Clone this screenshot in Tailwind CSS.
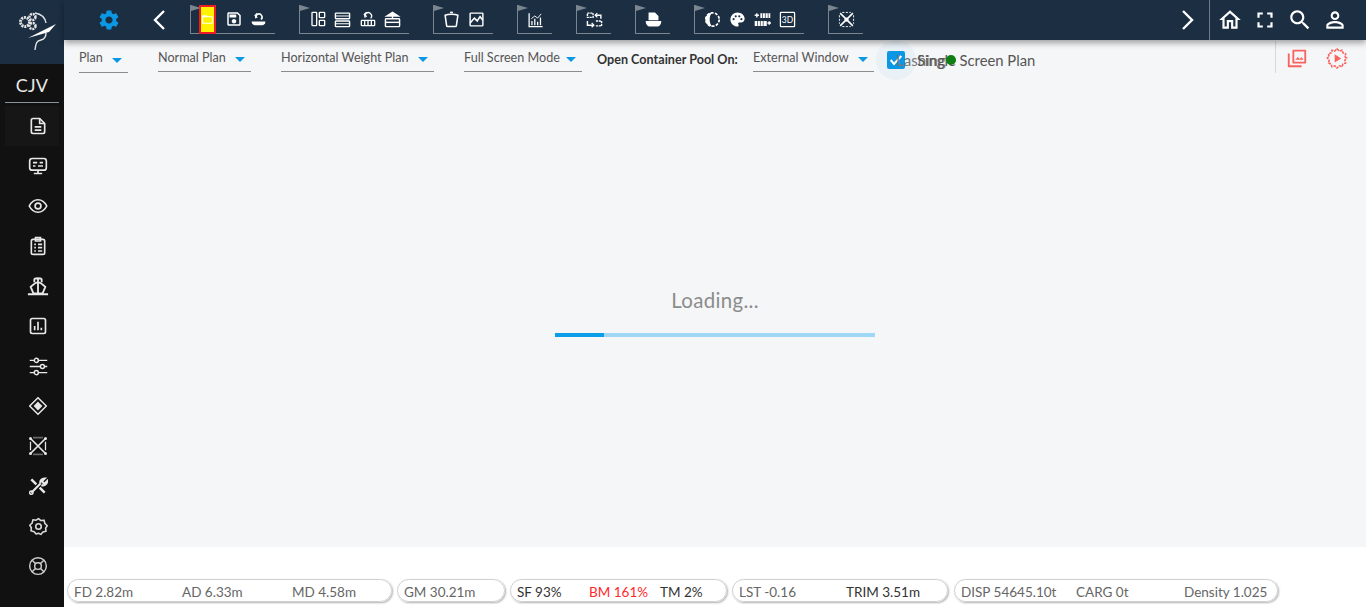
<!DOCTYPE html>
<html lang="en">
<head>
    <meta charset="UTF-8">
    <title>Stowage Plan</title>
    <script src="https://cdn.jsdelivr.net/npm/@tailwindcss/browser@4"></script>
</head>
<body class="bg-white font-['Lato','Open_Sans',sans-serif] overflow-hidden">
<div class="flex h-[607px] w-[1366px]">

    <!-- Sidebar -->
    <aside class="w-16 shrink-0 bg-[#111111] flex flex-col">
        <div class="h-16 bg-[#1b2e42] flex items-start pl-[17px] pt-[12px]">
            <svg class="w-[40px] h-[40px]" viewBox="0 0 40 40" fill="none" stroke="#e4e4e4">
                <circle cx="8" cy="10" r="4.500" stroke-width="3" stroke-dasharray="2 0.800"/>
                <circle cx="15.500" cy="5" r="3" stroke-width="2.500" stroke-dasharray="2 0.800"/>
                <circle cx="15.500" cy="14" r="3" stroke-width="2.500" stroke-dasharray="2 0.800"/>
                <path d="M18 1c6 1 10 4 11 10" stroke-width="1.400"/>
                <path d="M11 26L39 12l-7 8z" fill="#ffffff" stroke="none"/>
                <path d="M29 21c0 4-1 6-5 7-4 1-5 2-6 10" stroke-width="1.400"/>
            </svg>
        </div>
        <div class="mx-[5px] h-[39px] border-b border-[#8a939c] flex items-center justify-center text-[#e8e8e8] text-[18px] leading-none pt-1 tracking-[0.3px] font-['Lato',sans-serif]">CJV</div>
        <nav class="flex flex-col mt-[3px]">
            <a class="mx-[5px] h-10 bg-[#161616] flex items-center justify-center pl-[12px]">
                <svg class="w-[20px] h-[20px]" viewBox="0 0 24 24" fill="none" stroke="#e8e8e8" stroke-width="2"><path d="M6 3h8l6 6v10a2 2 0 0 1-2 2H6a2 2 0 0 1-2-2V5a2 2 0 0 1 2-2z" stroke-linejoin="round"/><path d="M14 3v6h6M8 13h8M8 17h8"/></svg>
            </a>
            <a class="mx-[5px] h-10 flex items-center justify-center pl-[12px]">
                <svg class="w-[20px] h-[20px]" viewBox="0 0 24 24" fill="none" stroke="#e8e8e8" stroke-width="2"><rect x="2" y="3" width="20" height="14" rx="3"/><path d="M6 8h5M14 8h4M6 12h3M12 12h6M12 17v3M7 21h10"/></svg>
            </a>
            <a class="mx-[5px] h-10 flex items-center justify-center pl-[12px]">
                <svg class="w-[20px] h-[20px]" viewBox="0 0 24 24" fill="none" stroke="#e8e8e8" stroke-width="2"><path d="M1.500 12C4 7 8 4.500 12 4.500S20 7 22.500 12C20 17 16 19.500 12 19.500S4 17 1.500 12z"/><circle cx="12" cy="12" r="3.500"/></svg>
            </a>
            <a class="mx-[5px] h-10 flex items-center justify-center pl-[12px]">
                <svg class="w-[20px] h-[20px]" viewBox="0 0 24 24" fill="none" stroke="#e8e8e8" stroke-width="2"><rect x="4" y="4" width="16" height="18" rx="2"/><path d="M9 2h6v4H9zM7.500 10h2M12 10h5M7.500 14h2M12 14h5M7.500 18h2M12 18h5"/></svg>
            </a>
            <a class="mx-[5px] h-10 flex items-center justify-center pl-[12px]">
                <svg class="w-[22px] h-[22px]" viewBox="0 0 24 24" fill="none" stroke="#e8e8e8" stroke-width="2"><path d="M8 8V5c0-2 8-2 8 0v3M12 4v4M4 13c3-3 5-5 8-5s5 2 8 5l-3 7H7zM12 8v12M1 21h22"/></svg>
            </a>
            <a class="mx-[5px] h-10 flex items-center justify-center pl-[12px]">
                <svg class="w-[20px] h-[20px]" viewBox="0 0 24 24" fill="none" stroke="#e8e8e8" stroke-width="2"><rect x="3" y="3" width="18" height="18" rx="2"/><path d="M8 17v-5M12 17V7M16 17v-3"/></svg>
            </a>
            <a class="mx-[5px] h-10 flex items-center justify-center pl-[12px]">
                <svg class="w-[21px] h-[21px]" viewBox="0 0 24 24" fill="none" stroke="#e8e8e8" stroke-width="1.700"><path d="M2 5h5M12 5h10M2 12h12M19 12h3M2 19h5M12 19h10"/><circle cx="9.500" cy="5" r="2.300"/><circle cx="16.500" cy="12" r="2.300"/><circle cx="9.500" cy="19" r="2.300"/></svg>
            </a>
            <a class="mx-[5px] h-10 flex items-center justify-center pl-[12px]">
                <svg class="w-[20px] h-[20px]" viewBox="0 0 24 24" fill="none" stroke="#e8e8e8" stroke-width="1.800"><path d="M12 2l10 10-10 10L2 12z" stroke-linejoin="round"/><path d="M12 8l4 4-4 4-4-4z" fill="#e8e8e8"/></svg>
            </a>
            <a class="mx-[5px] h-10 flex items-center justify-center pl-[12px]">
                <svg class="w-[20px] h-[20px]" viewBox="0 0 24 24" fill="none" stroke="#e8e8e8" stroke-width="2"><path d="M3 3l18 18M21 3L3 21"/><path d="M6 2h12M6 22h12" stroke="#666666"/><path d="M3 7v10M21 7v10" stroke-width="1.500"/><circle cx="3" cy="3" r="1.800" fill="#e8e8e8" stroke="none"/><circle cx="21" cy="3" r="1.800" fill="#e8e8e8" stroke="none"/><circle cx="3" cy="21" r="1.800" fill="#e8e8e8" stroke="none"/><circle cx="21" cy="21" r="1.800" fill="#e8e8e8" stroke="none"/></svg>
            </a>
            <a class="mx-[5px] h-10 flex items-center justify-center pl-[12px]">
                <svg class="w-[20px] h-[20px]" viewBox="0 0 24 24" fill="none" stroke="#e8e8e8" stroke-width="2.500"><path d="M4 20L15 9M15 9c-1-3 1-6 5-6l-3 3 1 2 2 1 3-3c0 4-4 6-7 5"/><circle cx="4" cy="20" r="2" stroke-width="1.800"/><path d="M4 4l6 6M14 14l6 6" stroke-width="3"/></svg>
            </a>
            <a class="mx-[5px] h-10 flex items-center justify-center pl-[12px]">
                <svg class="w-[19px] h-[19px]" viewBox="0 0 24 24" fill="none" stroke="#d8d8d8" stroke-width="2"><path d="M12 2l3 2.500 4-.5 1 4 3 3-2 3 .5 4-4 1-2.500 3-3-1.500L9 21.500l-2.500-3-4-1 .5-4-2-3 3-3 1-4 4 .5z" stroke-linejoin="round"/><circle cx="12" cy="12" r="3.500"/></svg>
            </a>
            <a class="mx-[5px] h-10 flex items-center justify-center pl-[12px]">
                <svg class="w-[20px] h-[20px]" viewBox="0 0 24 24" fill="none" stroke="#d0d0d0" stroke-width="1.700"><circle cx="12" cy="12" r="10"/><circle cx="12" cy="12" r="4"/><path d="M5 5l4 4M19 5l-4 4M5 19l4-4M19 19l-4-4"/></svg>
            </a>
        </nav>
    </aside>

    <div class="flex-1 flex flex-col min-w-0">

        <!-- Top bar -->
        <header class="h-10 shrink-0 bg-[#1b2e42] flex items-center relative z-10 shadow-[0_3px_6px_rgba(0,0,0,0.35)]">
            <svg class="w-[24px] h-[24px] ml-[33px] text-[#0b97e4]" viewBox="0 0 24 24" fill="currentColor"><path d="M19.140 12.940c.04-.3.06-.61.06-.94 0-.32-.02-.64-.07-.94l2.030-1.580c.18-.14.23-.41.12-.61l-1.920-3.320c-.12-.22-.37-.29-.59-.22l-2.390.96c-.5-.38-1.030-.7-1.620-.94l-.36-2.540c-.04-.24-.24-.41-.48-.41h-3.840c-.24 0-.43.17-.47.41l-.36 2.540c-.59.24-1.130.57-1.620.94l-2.390-.96c-.22-.08-.47 0-.59.22L2.740 8.870c-.12.21-.08.47.12.61l2.030 1.580c-.05.3-.09.63-.09.94s.02.64.07.94l-2.030 1.580c-.18.14-.23.41-.12.61l1.920 3.320c.12.22.37.29.59.22l2.390-.96c.5.38 1.030.7 1.620.94l.36 2.540c.05.24.24.41.48.41h3.840c.24 0 .44-.17.47-.41l.36-2.540c.59-.24 1.130-.56 1.620-.94l2.390.96c.22.08.47 0 .59-.22l1.920-3.320c.12-.22.07-.47-.12-.61l-2.010-1.580zM12 15.600c-1.980 0-3.600-1.620-3.600-3.600s1.620-3.600 3.600-3.600 3.600 1.620 3.600 3.600-1.620 3.600-3.600 3.600z"/></svg>
            <svg class="w-[14px] h-[20px] ml-[31px]" viewBox="0 0 14 20" fill="none" stroke="#ffffff" stroke-width="2.400"><path d="M12 1L3 10l9 9"/></svg>

            <div class="flex ml-[24px] gap-6">
                <!-- file group -->
                <div class="relative h-[29px] mt-[-1px] border-l border-b border-[#7a858f] flex items-center pl-[5px] pr-[4px]">
                    <svg class="absolute left-0 top-0 w-[10px] h-[6px]" viewBox="0 0 10 6"><path d="M0 0l10 3-10 3z" fill="#7a858f"/></svg>
                    <div class="w-[25px] h-[29px] flex justify-center">
                        <div class="w-[17px] h-[29px] bg-[#fff200] border-2 border-[#ee1c25] flex items-center justify-center ml-[-2px]">
                            <svg class="w-[13px] h-[13px]" viewBox="0 0 24 24" fill="#ffffff"><path d="M20 6h-8l-2-2H4c-1.100 0-1.990.9-1.990 2L2 18c0 1.100.9 2 2 2h16c1.100 0 2-.9 2-2V8c0-1.100-.9-2-2-2zm0 12H4V8h16v10z"/></svg>
                        </div>
                    </div>
                    <div class="w-[25px] flex justify-center">
                        <svg class="w-[18px] h-[18px]" viewBox="0 0 24 24" fill="#ffffff"><path d="M17 3H5c-1.110 0-2 .9-2 2v14c0 1.100.89 2 2 2h14c1.100 0 2-.9 2-2V7l-4-4zm2 16H5V5h11.170L19 7.830V19zm-7-7c-1.660 0-3 1.340-3 3s1.340 3 3 3 3-1.340 3-3-1.340-3-3-3zM6 6h9v4H6z"/></svg>
                    </div>
                    <div class="w-[25px] flex justify-center">
                        <svg class="w-[15px] h-[15px]" viewBox="0 0 24 24" fill="none" stroke="#ffffff" stroke-width="2.500"><path d="M8 10a5 5 0 1 1 8 2"/><path d="M10 2L6.500 5.500 10 9" stroke-width="2"/><path d="M1 15h22c0 4-3 6-5 6H6c-2 0-5-2-5-6z" fill="#ffffff" stroke="none"/></svg>
                    </div>
                </div>
                <!-- layout group -->
                <div class="relative h-[29px] mt-[-1px] border-l border-b border-[#7a858f] flex items-center pl-[5px] pr-[4px]">
                    <svg class="absolute left-0 top-0 w-[10px] h-[6px]" viewBox="0 0 10 6"><path d="M0 0l10 3-10 3z" fill="#7a858f"/></svg>
                    <div class="w-[25px] flex justify-center">
                        <svg class="w-[16px] h-[16px]" viewBox="0 0 24 24" fill="none" stroke="#ffffff" stroke-width="2"><rect x="3" y="2" width="7" height="20" rx="1"/><rect x="14" y="2" width="8" height="8" rx="1"/><rect x="14" y="14" width="8" height="8" rx="1"/></svg>
                    </div>
                    <div class="w-[25px] flex justify-center">
                        <svg class="w-[17px] h-[17px]" viewBox="0 0 24 24" fill="none" stroke="#ffffff" stroke-width="2"><rect x="2" y="3" width="20" height="8" rx="1"/><rect x="2" y="14" width="20" height="8" rx="1"/><path d="M2 7h20M2 18h20" stroke-width="1.500"/></svg>
                    </div>
                    <div class="w-[25px] flex justify-center">
                        <svg class="w-[16px] h-[16px]" viewBox="0 0 24 24" fill="none" stroke="#ffffff" stroke-width="2"><path d="M8 10a5 5 0 1 1 8 1"/><path d="M10 2L6.500 5 10 8.500"/><rect x="2" y="14" width="20" height="8" rx="1"/><path d="M7 14v8M12 14v8M17 14v8"/></svg>
                    </div>
                    <div class="w-[25px] flex justify-center">
                        <svg class="w-[17px] h-[17px]" viewBox="0 0 24 24" fill="none" stroke="#ffffff" stroke-width="2"><path d="M12 2l8 5H4z" fill="#ffffff"/><path d="M12 7v4"/><rect x="2" y="11" width="20" height="11" rx="1"/><path d="M2 16h20"/></svg>
                    </div>
                </div>
                <!-- view group -->
                <div class="relative h-[29px] mt-[-1px] border-l border-b border-[#7a858f] flex items-center pl-[5px] pr-[4px]">
                    <svg class="absolute left-0 top-0 w-[10px] h-[6px]" viewBox="0 0 10 6"><path d="M0 0l10 3-10 3z" fill="#7a858f"/></svg>
                    <div class="w-[25px] flex justify-center">
                        <svg class="w-[17px] h-[17px]" viewBox="0 0 24 24" fill="none" stroke="#ffffff" stroke-width="2.200"><path d="M3 6c4-2 14-2 18 0l-2 14a2 2 0 0 1-2 2H7a2 2 0 0 1-2-2z" stroke-linejoin="round"/><path d="M10 2h4"/></svg>
                    </div>
                    <div class="w-[25px] flex justify-center">
                        <svg class="w-[17px] h-[17px]" viewBox="0 0 24 24" fill="none" stroke="#ffffff" stroke-width="2"><rect x="3" y="3" width="18" height="18" rx="1"/><path d="M3 17l6-7 4 4 4-6 4 5" stroke-width="2.200"/></svg>
                    </div>
                </div>
                <!-- chart group -->
                <div class="relative h-[29px] mt-[-1px] border-l border-b border-[#7a858f] flex items-center pl-[5px] pr-[4px]">
                    <svg class="absolute left-0 top-0 w-[10px] h-[6px]" viewBox="0 0 10 6"><path d="M0 0l10 3-10 3z" fill="#7a858f"/></svg>
                    <div class="w-[25px] flex justify-center">
                        <svg class="w-[17px] h-[17px]" viewBox="0 0 24 24" fill="none" stroke="#ffffff" stroke-width="1.800"><path d="M3 3v19h19"/><path d="M7 20v-6M11 20v-9M15 20v-5M19 20V9"/><path d="M6 11l5-4 4 3 5-6" stroke-width="1.300"/></svg>
                    </div>
                </div>
                <!-- swap group -->
                <div class="relative h-[29px] mt-[-1px] border-l border-b border-[#7a858f] flex items-center pl-[5px] pr-[4px]">
                    <svg class="absolute left-0 top-0 w-[10px] h-[6px]" viewBox="0 0 10 6"><path d="M0 0l10 3-10 3z" fill="#7a858f"/></svg>
                    <div class="w-[25px] flex justify-center">
                        <svg class="w-[17px] h-[17px]" viewBox="0 0 24 24" fill="none" stroke="#ffffff" stroke-width="2"><path d="M2 3h8v6H2z" stroke-dasharray="3 1"/><path d="M13 6h8v5"/><path d="M16 3l-3 3 3 3" stroke-width="1.800"/><path d="M2 14v6h9"/><path d="M14 14h8v7h-8" stroke-dasharray="3 1"/><path d="M8 17l3 3-3 3" stroke-width="1.800"/></svg>
                    </div>
                </div>
                <!-- report group -->
                <div class="relative h-[29px] mt-[-1px] border-l border-b border-[#7a858f] flex items-center pl-[5px] pr-[4px]">
                    <svg class="absolute left-0 top-0 w-[10px] h-[6px]" viewBox="0 0 10 6"><path d="M0 0l10 3-10 3z" fill="#7a858f"/></svg>
                    <div class="w-[25px] flex justify-center">
                        <svg class="w-[17px] h-[17px]" viewBox="0 0 24 24" fill="#ffffff"><path d="M5 2h9l5 5v6H5z"/><path d="M1 14h22c0 5-3 8-6 8H7c-3 0-6-3-6-8z"/></svg>
                    </div>
                </div>
                <!-- display group -->
                <div class="relative h-[29px] mt-[-1px] border-l border-b border-[#7a858f] flex items-center pl-[5px] pr-[4px]">
                    <svg class="absolute left-0 top-0 w-[10px] h-[6px]" viewBox="0 0 10 6"><path d="M0 0l10 3-10 3z" fill="#7a858f"/></svg>
                    <div class="w-[25px] flex justify-center">
                        <svg class="w-[17px] h-[17px]" viewBox="0 0 24 24" fill="none" stroke="#ffffff" stroke-width="2.500"><path d="M12 2a10 10 0 1 0 0 20c-3-2-4-6-4-10s1-8 4-10z" fill="#ffffff" stroke="none"/><circle cx="12" cy="12" r="9.500" stroke-dasharray="4 2"/></svg>
                    </div>
                    <div class="w-[25px] flex justify-center">
                        <svg class="w-[17px] h-[17px]" viewBox="0 0 24 24" fill="#ffffff"><path d="M12 2C6.500 2 2 6.500 2 12s4.500 10 10 10c1 0 1.700-.8 1.700-1.700 0-.4-.2-.8-.4-1.100-.3-.3-.4-.7-.4-1.100 0-.9.800-1.700 1.700-1.700h2c3.100 0 5.500-2.500 5.500-5.500C22 6 17.500 2 12 2zM6.500 13a1.500 1.500 0 1 1 0-3 1.500 1.500 0 0 1 0 3zm3-4a1.500 1.500 0 1 1 0-3 1.500 1.500 0 0 1 0 3zm5 0a1.500 1.500 0 1 1 0-3 1.500 1.500 0 0 1 0 3zm3 4a1.500 1.500 0 1 1 0-3 1.500 1.500 0 0 1 0 3z"/></svg>
                    </div>
                    <div class="w-[25px] flex justify-center">
                        <svg class="w-[17px] h-[17px]" viewBox="0 0 24 24" fill="#ffffff"><path d="M9 3h14v7H9zM1 14h17v7H1z"/><path d="M1 6h6M4 3v6M19 17h5M21.500 14.500v5" stroke="#ffffff" stroke-width="2"/><path d="M12 3v7M16 3v7M20 3v7M5 14v7M9 14v7M13 14v7" stroke="#1b2e42" stroke-width="1"/></svg>
                    </div>
                    <div class="w-[25px] flex justify-center">
                        <svg class="w-[17px] h-[17px]" viewBox="0 0 24 24" fill="none"><rect x="2" y="2" width="20" height="20" rx="1" stroke="#ffffff" stroke-width="1.800"/><text x="12" y="16.500" text-anchor="middle" font-size="12" font-family="Lato, sans-serif" fill="#ffffff">3D</text></svg>
                    </div>
                </div>
                <!-- cross group -->
                <div class="relative h-[29px] mt-[-1px] border-l border-b border-[#7a858f] flex items-center pl-[5px] pr-[4px]">
                    <svg class="absolute left-0 top-0 w-[10px] h-[6px]" viewBox="0 0 10 6"><path d="M0 0l10 3-10 3z" fill="#7a858f"/></svg>
                    <div class="w-[25px] flex justify-center">
                        <svg class="w-[17px] h-[17px]" viewBox="0 0 24 24" fill="none" stroke="#ffffff" stroke-width="2.200"><path d="M3 3l18 18M21 3L3 21"/><path d="M6 2h12M6 22h12M2 6v12M22 6v12" stroke-width="1.300" stroke-dasharray="3 2"/><circle cx="12" cy="12" r="3" fill="#ffffff" stroke="none"/></svg>
                    </div>
                </div>
            </div>

            <!-- right tools -->
            <div class="ml-auto flex items-center h-10">
                <svg class="w-[14px] h-[20px] mr-[14px]" viewBox="0 0 14 20" fill="none" stroke="#ffffff" stroke-width="2.400"><path d="M2 1l9 9-9 9"/></svg>
                <div class="w-px h-10 bg-[#6f7a85]"></div>
                <div class="flex pl-[7px] pr-[18px] gap-[9px]">
                    <svg class="w-[26px] h-[26px]" viewBox="0 0 24 24" fill="#ffffff"><path d="M12 5.690l5 4.500V18h-2v-6H9v6H7v-7.810l5-4.500M12 3L2 12h3v8h6v-6h2v6h6v-8h3L12 3z"/></svg>
                    <svg class="w-[26px] h-[26px]" viewBox="0 0 24 24" fill="#ffffff"><path d="M7 14H5v5h5v-2H7v-3zm-2-4h2V7h3V5H5v5zm12 7h-3v2h5v-5h-2v3zM14 5v2h3v3h2V5h-5z"/></svg>
                    <svg class="w-[26px] h-[26px]" viewBox="0 0 24 24" fill="#ffffff"><path d="M15.500 14h-.79l-.28-.27C15.410 12.590 16 11.110 16 9.500 16 5.910 13.090 3 9.500 3S3 5.910 3 9.500 5.910 16 9.500 16c1.610 0 3.090-.59 4.230-1.570l.27.28v.79l5 4.990L20.490 19l-4.990-5zm-6 0C7.010 14 5 11.990 5 9.500S7.010 5 9.500 5 14 7.010 14 9.500 11.990 14 9.500 14z"/></svg>
                    <svg class="w-[26px] h-[26px]" viewBox="0 0 24 24" fill="#ffffff"><path d="M12 5.900c1.160 0 2.100.94 2.100 2.100s-.94 2.100-2.100 2.100S9.900 9.160 9.900 8s.94-2.100 2.100-2.100m0 9c2.970 0 6.100 1.460 6.100 2.100v1.100H5.900V17c0-.64 3.130-2.100 6.100-2.100M12 4C9.790 4 8 5.790 8 8s1.790 4 4 4 4-1.790 4-4-1.790-4-4-4zm0 9c-2.670 0-8 1.340-8 4v3h16v-3c0-2.660-5.330-4-8-4z"/></svg>
                </div>
            </div>
        </header>

        <!-- Plan area -->
        <main class="flex-1 bg-[#f5f6f8] flex flex-col min-h-0">
            <div class="h-10 shrink-0 flex items-start pl-[15px] text-[12.6px] text-[#555555]">
                <div class="w-[49px] h-[33px] border-b border-[#8c8c8c] flex items-center justify-between pr-[6px] pt-[5px]">
                    <span>Plan</span>
                    <span class="w-0 h-0 border-x-[5px] border-x-transparent border-t-[5px] border-t-[#0b97e4] mt-[3px]"></span>
                </div>
                <div class="w-[93px] h-[32px] ml-[30px] border-b border-[#8c8c8c] flex items-center justify-between pr-[6px] pt-[5px]">
                    <span>Normal Plan</span>
                    <span class="w-0 h-0 border-x-[5px] border-x-transparent border-t-[5px] border-t-[#0b97e4] mt-[3px]"></span>
                </div>
                <div class="w-[153px] h-[32px] ml-[30px] border-b border-[#8c8c8c] flex items-center justify-between pr-[6px] pt-[5px]">
                    <span>Horizontal Weight Plan</span>
                    <span class="w-0 h-0 border-x-[5px] border-x-transparent border-t-[5px] border-t-[#0b97e4] mt-[3px]"></span>
                </div>
                <div class="w-[118px] h-[32px] ml-[30px] border-b border-[#8c8c8c] flex items-center justify-between pr-[6px] pt-[5px]">
                    <span>Full Screen Mode</span>
                    <span class="w-0 h-0 border-x-[5px] border-x-transparent border-t-[5px] border-t-[#0b97e4] mt-[3px]"></span>
                </div>
                <span class="ml-[15px] mt-[12px] font-bold text-[#333333] leading-4 w-[156px] whitespace-nowrap">Open Container Pool On:</span>
                <div class="w-[121px] h-[32px] border-b border-[#8c8c8c] flex items-center justify-between pr-[6px] pt-[5px]">
                    <span>External Window</span>
                    <span class="w-0 h-0 border-x-[5px] border-x-transparent border-t-[5px] border-t-[#0b97e4] mt-[3px]"></span>
                </div>
                <!-- lashing checkbox, its label runs under the next label as in the app -->
                <div class="relative ml-[13px] mt-[11px] w-[18px] h-[18px] bg-[#0b97e4] rounded-[2px] flex items-center justify-center">
                    <span class="absolute -inset-[11px] rounded-full bg-[#0b97e4]/5"></span>
                    <svg class="w-[16px] h-[16px] relative" viewBox="0 0 24 24" fill="none" stroke="#ffffff" stroke-width="3"><path d="M4 12l5 6L20 6"/></svg>
                </div>
                <span class="mt-[11px] w-[21px] leading-[18px] text-[15px] text-[#777777] whitespace-nowrap relative -ml-[9px]">Lashing</span>
                <div class="relative ml-[0px] mt-[10px] text-[14.8px] leading-5 text-[#555555] whitespace-nowrap">
                    Single Screen Plan
                    <span class="absolute left-[29px] top-[5px] w-[10px] h-[10px] rounded-full bg-[#0f7f12]"></span>
                </div>
                <div class="ml-auto h-[32px] border-l border-[#d8d8d8] flex items-center mr-[18px] pl-[10px] gap-[18px] mt-[1px] pt-[1px]">
                    <svg class="w-[22px] h-[22px]" viewBox="0 0 24 24" fill="#f9625d"><path d="M21 3H8a1 1 0 0 0-1 1v13a1 1 0 0 0 1 1h13a1 1 0 0 0 1-1V4a1 1 0 0 0-1-1zm-1 13H9V5h11zM4 7H2v14a1 1 0 0 0 1 1h14v-2H4z"/><path d="M10 14l3-3 2 2 2-2 2 3z"/></svg>
                    <svg class="w-[22px] h-[22px]" viewBox="0 0 24 24" fill="none" stroke="#f9625d" stroke-width="1.700"><path d="M12 2l2.500 2.500 3-1 1 3 3 1-1 3 2 1.500-2 2.500 1 3-3 1-1 3-3-1L12 23l-2.500-2.500-3 1-1-3-3-1 1-3-2-2.500 2-1.500-1-3 3-1 1-3 3 1z" stroke-dasharray="3 1"/><path d="M9.500 8l7 4.500-7 4.500z" fill="#f9625d" stroke="none"/></svg>
                </div>
            </div>

            <div class="flex-1 flex flex-col items-center justify-center pb-[5px]">
                <p class="text-[20.5px] leading-7 text-[#8c8c8c] tracking-[0.3px]">Loading...</p>
                <div class="mt-[19px] w-80 h-1 bg-[#9fd8f7]">
                    <div class="w-[49px] h-1 bg-[#0b9ee8]"></div>
                </div>
            </div>
        </main>

        <!-- Ship stats -->
        <footer class="h-[60px] shrink-0 bg-white flex items-start pl-[3px] pt-[32px] gap-[5px] text-[13.5px] text-[#666666]">
            <div class="w-[325px] h-[23px] rounded-full border border-[#d0d0d0] shadow-[1px_1px_2px_rgba(0,0,0,0.3)] flex items-center pl-[6px] pt-[3px]">
                <span class="w-[108px]">FD 2.82m</span>
                <span class="w-[110px]">AD 6.33m</span>
                <span>MD 4.58m</span>
            </div>
            <div class="w-[108px] h-[23px] rounded-full border border-[#d0d0d0] shadow-[1px_1px_2px_rgba(0,0,0,0.3)] flex items-center pl-[6px] pt-[3px]">
                <span>GM 30.21m</span>
            </div>
            <div class="w-[217px] h-[23px] rounded-full border border-[#d0d0d0] shadow-[1px_1px_2px_rgba(0,0,0,0.3)] flex items-center pl-[6px] pt-[3px] text-[#333333]">
                <span class="w-[72px]">SF 93%</span>
                <span class="w-[71px] text-[#ff2a2a]">BM 161%</span>
                <span>TM 2%</span>
            </div>
            <div class="w-[216px] h-[23px] rounded-full border border-[#d0d0d0] shadow-[1px_1px_2px_rgba(0,0,0,0.3)] flex items-center pl-[6px] pt-[3px]">
                <span class="w-[107px]">LST -0.16</span>
                <span class="text-[#333333]">TRIM 3.51m</span>
            </div>
            <div class="w-[324px] h-[23px] rounded-full border border-[#d0d0d0] shadow-[1px_1px_2px_rgba(0,0,0,0.3)] flex items-center pl-[6px] pt-[3px] ml-px">
                <span class="w-[115px]">DISP 54645.10t</span>
                <span class="w-[108px]">CARG 0t</span>
                <span>Density 1.025</span>
            </div>
        </footer>
    </div>
</div>
</body>
</html>
